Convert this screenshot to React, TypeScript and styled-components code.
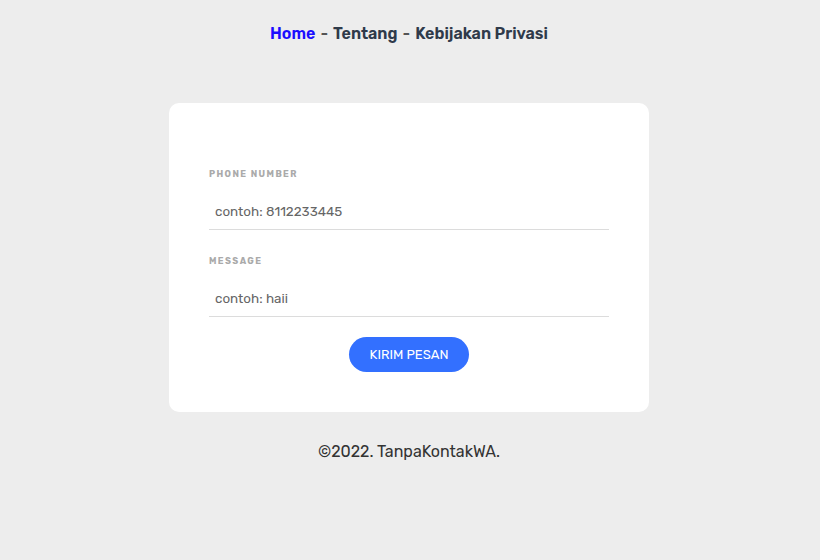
import React from "react";
import styled, { createGlobalStyle } from "styled-components";

const Global = createGlobalStyle`
  html, body { margin: 0; padding: 0; background: #ededed; }
  body { font-family: Rubik, Inter, "Noto Sans", sans-serif; }
  * { box-sizing: border-box; }
`;

const Page = styled.div`
  display: flex;
  flex-direction: column;
  align-items: center;
  padding-top: 24px;
  padding-right: 2px;
`;

const Nav = styled.nav`
  font-size: 16px;
  font-weight: 600;
  color: #2f3a4a;
  line-height: 20px;
  display: flex;
  gap: 5px;
`;

const NavLink = styled.a<{ $active?: boolean }>`
  color: ${(p) => (p.$active ? "#1a0dff" : "#2f3a4a")};
  text-decoration: none;
`;

const Sep = styled.span`
  color: #555;
  font-weight: 500;
`;

const Card = styled.form`
  margin-top: 59px;
  width: 480px;
  background: #fff;
  border-radius: 10px;
  padding: 65px 40px 40px;
  display: flex;
  flex-direction: column;
`;

const Field = styled.div`
  display: flex;
  flex-direction: column;
  margin-bottom: 25px;
  &:last-of-type { margin-bottom: 20px; }
`;

const Label = styled.label`
  font-size: 9px;
  font-weight: 700;
  letter-spacing: 1.4px;
  color: #aaa;
  text-transform: uppercase;
  line-height: 12px;
`;

const Input = styled.input`
  margin-top: 15px;
  border: none;
  border-bottom: 1px solid #dcdcdc;
  outline: none;
  font-family: inherit;
  font-size: 13.4px;
  color: #555;
  padding: 8px 6px 10px;
  &::placeholder { color: #666; }
`;

const Button = styled.button`
  align-self: center;
  width: 120px;
  height: 35px;
  border: none;
  border-radius: 18px;
  background: #3370ff;
  color: #fff;
  font-family: inherit;
  font-size: 13px;
  font-weight: 400;
`;

const Footer = styled.footer`
  margin-top: 30px;
  font-size: 16px;
  color: #333;
`;

export default function App() {
  return (
    <>
      <Global />
      <Page>
        <Nav>
          <NavLink $active href="#">Home</NavLink>
          <Sep>-</Sep>
          <NavLink href="#">Tentang</NavLink>
          <Sep>-</Sep>
          <NavLink href="#">Kebijakan Privasi</NavLink>
        </Nav>
        <Card onSubmit={(e) => e.preventDefault()}>
          <Field>
            <Label>Phone Number</Label>
            <Input placeholder="contoh: 8112233445" />
          </Field>
          <Field>
            <Label>Message</Label>
            <Input placeholder="contoh: haii" />
          </Field>
          <Button type="submit">KIRIM PESAN</Button>
        </Card>
        <Footer>©2022. TanpaKontakWA.</Footer>
      </Page>
    </>
  );
}
